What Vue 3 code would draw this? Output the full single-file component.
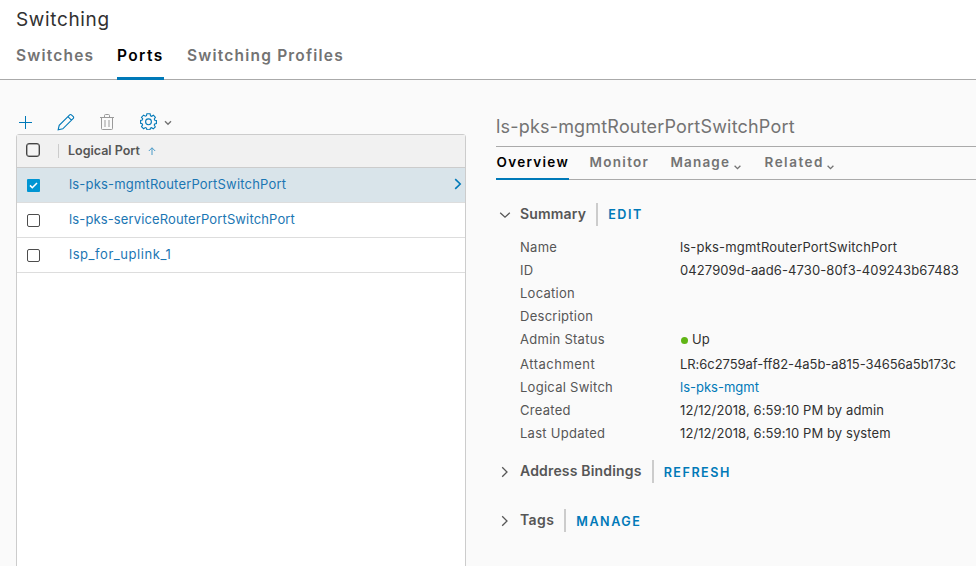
<script setup>
import { ref } from 'vue'

const tabs = [
  { label: 'Switches', cls: 'w-switches' },
  { label: 'Ports', cls: 'w-ports', active: true },
  { label: 'Switching Profiles', cls: 'w-profiles' },
]

const ports = ref([
  { name: 'ls-pks-mgmtRouterPortSwitchPort', selected: true },
  { name: 'ls-pks-serviceRouterPortSwitchPort', selected: false },
  { name: 'lsp_for_uplink_1', selected: false },
])

const subTabs = [
  { label: 'Overview', cls: 's-overview', active: true },
  { label: 'Monitor', cls: 's-monitor' },
  { label: 'Manage', cls: 's-manage', menu: true },
  { label: 'Related', cls: 's-related', menu: true },
]

const fields = [
  { label: 'Name', value: 'ls-pks-mgmtRouterPortSwitchPort', kind: 'name' },
  { label: 'ID', value: '0427909d-aad6-4730-80f3-409243b67483', kind: 'uuid' },
  { label: 'Location', value: '' },
  { label: 'Description', value: '' },
  { label: 'Admin Status', value: 'Up', kind: 'status' },
  { label: 'Attachment', value: 'LR:6c2759af-ff82-4a5b-a815-34656a5b173c', kind: 'attach' },
  { label: 'Logical Switch', value: 'ls-pks-mgmt', kind: 'link' },
  { label: 'Created', value: '12/12/2018, 6:59:10 PM by admin', kind: 'date' },
  { label: 'Last Updated', value: '12/12/2018, 6:59:10 PM by system', kind: 'date' },
]
</script>

<template>
  <div class="page">
    <header class="top">
      <h1>Switching</h1>
      <nav class="tabs">
        <a v-for="t in tabs" :key="t.label" class="tab" :class="[t.cls, { active: t.active }]">{{ t.label }}</a>
      </nav>
    </header>

    <main class="body">
      <section class="list">
        <div class="toolbar">
          <svg class="add" width="13" height="13" viewBox="0 0 13 13"><path d="M6.5 0v13M0 6.5h13" /></svg>
          <svg class="edit" width="18" height="18" viewBox="0 0 18 18"><path d="M1.2 16.7l1-4.4L12.7 1.8a1.2 1.2 0 0 1 1.7 0l1.9 1.9a1.2 1.2 0 0 1 0 1.7L5.8 15.8zM10.9 3.7l3.5 3.5" /></svg>
          <svg class="trash" width="14" height="17" viewBox="0 0 14 17"><path d="M0 3.5h14M4.5 3V1.7q0-1.2.9-1.2h3.2q.9 0 .9 1.2V3M1.5 3.5v11.2q0 .8 1 .8h9q1 0 1-.8V3.5M5 6v7M9 6v7" /></svg>
          <svg class="gear" width="17" height="17" viewBox="0 0 17 17">
            <path d="M6.9.8h3.2l.4 2 1.1.5 1.8-1.1 2 2.1-1.1 1.7.5 1.2 1.6.3v3l-1.7.4-.5 1.1 1.1 1.8-2 2-1.8-1.1-1.1.5-.4 1.5H6.9l-.4-1.6-1.2-.5-1.7 1.1-2.1-2 1.1-1.8-.5-1.1-1.5-.4v-3l1.6-.3.5-1.2-1.2-1.7 2.1-2.1 1.7 1.1 1.2-.5z" />
            <circle cx="8.5" cy="8.8" r="2.9" />
          </svg>
          <svg class="caret" width="8" height="6" viewBox="0 0 8 6"><path d="M1 1.2l3 3 3-3" /></svg>
        </div>

        <div class="grid">
          <div class="row head">
            <span class="box head-box"></span>
            <span class="separator"></span>
            <span class="column">Logical Port</span>
            <svg class="sort" width="8" height="8" viewBox="0 0 8 8"><path d="M4 8V.8M.8 4L4 .8 7.2 4" /></svg>
          </div>
          <div v-for="(p, i) in ports" :key="p.name" class="row" :class="{ selected: p.selected }">
            <span class="box" :class="{ checked: p.selected }">
              <svg v-if="p.selected" width="13" height="13" viewBox="0 0 13 13"><path d="M3 6.4l2.3 2.3L10 4" /></svg>
            </span>
            <a class="port" :class="'p' + i">{{ p.name }}</a>
            <svg v-if="p.selected" class="open" width="8" height="12" viewBox="0 0 8 12"><path d="M1.2 1.2L6.2 6l-5 4.8" /></svg>
          </div>
        </div>
      </section>

      <section class="detail">
        <h2>ls-pks-mgmtRouterPortSwitchPort</h2>
        <nav class="subtabs">
          <a v-for="t in subTabs" :key="t.label" class="subtab" :class="[t.cls, { active: t.active }]">
            <span>{{ t.label }}</span>
            <svg v-if="t.menu" width="7" height="5" viewBox="0 0 7 5"><path d="M.6.8l2.9 2.9L6.4.8" /></svg>
          </a>
        </nav>

        <div class="section">
          <svg class="arrow" width="12" height="12" viewBox="0 0 12 12"><path d="M1.2 3.8L6 8.2l4.8-4.4" /></svg>
          <h3 class="h-summary">Summary</h3>
          <a class="action">EDIT</a>
        </div>
        <dl class="fields">
          <div v-for="f in fields" :key="f.label" class="field" :class="f.kind">
            <dt>{{ f.label }}</dt>
            <dd><i v-if="f.kind === 'status'" class="dot"></i><span>{{ f.value }}</span></dd>
          </div>
        </dl>
        <div class="section bindings">
          <svg class="arrow" width="12" height="12" viewBox="0 0 12 12"><path d="M3.2 1.2L8 6l-4.8 4.8" /></svg>
          <h3 class="h-bindings">Address Bindings</h3>
          <a class="action">REFRESH</a>
        </div>
        <div class="section tags">
          <svg class="arrow" width="12" height="12" viewBox="0 0 12 12"><path d="M3.2 1.2L8 6l-4.8 4.8" /></svg>
          <h3 class="h-tags">Tags</h3>
          <a class="action">MANAGE</a>
        </div>
      </section>
    </main>
  </div>
</template>

<style>
body { background: #fafafa; overflow: hidden; }
</style>

<style scoped>
* { box-sizing: border-box; }
.page {
  height: 566px;
  display: flex;
  flex-direction: column;
  overflow: hidden;
  background: #fafafa;
  color: #313131;
  font-family: Inter, "Open Sans", sans-serif;
  font-size: 13px;
  white-space: nowrap;
}
h1, h2, h3, dl, dd { margin: 0; font-weight: 400; }
svg { display: block; flex: none; fill: none; stroke: #0079b8; stroke-width: 1.1; }

.top { flex: none; height: 80px; padding: 8px 16px 0; background: #fff; border-bottom: 1px solid #aaa; }
h1 { height: 23px; line-height: 24px; font-size: 19px; letter-spacing: 0.65px; }
.tabs { display: flex; gap: 24px; height: 49px; }
.tab { height: 49px; line-height: 49px; font-size: 15.5px; font-weight: 600; letter-spacing: 1.2px; color: #737373; }
.tab.active { color: #000; border-bottom: 3px solid #0079b8; }
.w-switches { width: 77px; }
.w-ports { width: 47px; letter-spacing: 1.4px; }
.w-profiles { margin-left: -1px; }

.body { flex: 1; min-height: 0; display: flex; padding-left: 16px; gap: 30px; }
.list { width: 450px; flex: none; display: flex; flex-direction: column; padding-top: 33px; }
.toolbar { flex: none; height: 21px; display: flex; align-items: flex-start; }
.add { margin: 3px 0 0 3px; stroke-width: 1; }
.edit { margin-left: 25px; }
.trash { margin: 1px 0 0 25px; stroke: #9a9a9a; stroke-width: 1; }
.gear { margin: 0 0 0 26px; }
.caret { margin: 7px 0 0 7px; stroke: #737373; stroke-width: 1.4; }

.grid { flex: 1; margin-bottom: -4px; background: #fff; border: 1px solid #ccc; border-radius: 3px 3px 0 0; }
.row { height: 35px; display: flex; align-items: center; padding-left: 10px; border-bottom: 1px solid #ddd; }
.row.head { height: 33px; padding-left: 9px; background: #f1f1f1; border-color: #ccc; }
.row.selected { background: #d9e4ea; }
.box { flex: none; width: 13px; height: 13px; margin-top: 1px; border: 1px solid #4d4d4d; border-radius: 2px; background: #fff; }
.head-box { width: 14px; height: 14px; margin-top: -2px; border-color: #444; box-shadow: inset 0 0 0 0.5px #666; border-radius: 3px; background: #f4f4f4; }
.box.checked { border: 0; background: #0095d3; border-radius: 1px; }
.box.checked svg { stroke: #fff; stroke-width: 1.6; }
.separator { width: 1px; height: 14px; margin-left: 18px; background: #ccc; }
.column { margin: -1px 0 0 9px; font-size: 12.5px; font-weight: 600; color: #565656; }
.sort { margin: -1px 0 0 8px; stroke: #4b9ac7; stroke-width: 1; }
.port { margin: -2px 0 0 29px; color: #1b76b3; }
.p0 { letter-spacing: 0.18px; }
.p1 { letter-spacing: 0.13px; }
.p2 { letter-spacing: 0.55px; }
.open { margin: -2px 3px 0 auto; stroke-width: 1.6; }

.detail { flex: 1; min-width: 0; padding-top: 34px; }
h2 { height: 33px; padding-bottom: 7px; border-bottom: 1px solid #aaa; line-height: 26px; font-size: 18px; letter-spacing: 0.19px; color: #737373; }
.subtabs { height: 33px; display: flex; gap: 20px; border-bottom: 1px solid #aaa; }
.subtab { display: flex; height: 33px; padding-left: 0.5px; line-height: 30px; font-size: 13.5px; font-weight: 600; letter-spacing: 1.3px; color: #737373; }
.subtab.active { color: #000; border-bottom: 2px solid #0079b8; }
.subtab svg { margin: 18px 0 0 3.5px; stroke: #737373; stroke-width: 1.3; }
.s-overview { width: 73px; }
.s-monitor { width: 61px; }
.s-manage { width: 74px; letter-spacing: 1.15px; }
.s-related { letter-spacing: 1.5px; }

.section { height: 23px; margin-top: 23px; display: flex; align-items: center; padding-left: 3px; }
.arrow { stroke: #565656; stroke-width: 1.3; }
h3 { margin: -2px 0 0 9px; font-size: 14px; font-weight: 600; letter-spacing: 0.18px; color: #565656; }
.h-summary { margin-top: -3px; }
.h-tags { letter-spacing: 0.4px; }
.action { margin-left: 10px; height: 23px; line-height: 23px; padding-left: 10px; border-left: 2px solid #ccc; font-size: 12.6px; font-weight: 600; letter-spacing: 1.5px; color: #0079b8; }
.bindings .action, .tags .action { line-height: 25px; }
.fields { margin: 10px 0 0 24px; }
.field { height: 23px; line-height: 23px; display: flex; }
.field.status { height: 25px; }
dt { width: 160px; letter-spacing: 0.27px; color: #565656; }
dd { display: flex; }
.name dd { letter-spacing: 0.18px; }
.uuid dd { letter-spacing: 0.1px; }
.attach dt { letter-spacing: 0.5px; }
.attach dd { letter-spacing: -0.05px; }
.date dd { letter-spacing: 0.1px; }
.link dd { color: #0079b8; }
.dot { width: 7px; height: 7px; margin: 9px 4px 0 1px; border-radius: 50%; background: #60b515; }
.bindings { margin-top: 15px; }
.tags { margin-top: 26px; }
</style>
